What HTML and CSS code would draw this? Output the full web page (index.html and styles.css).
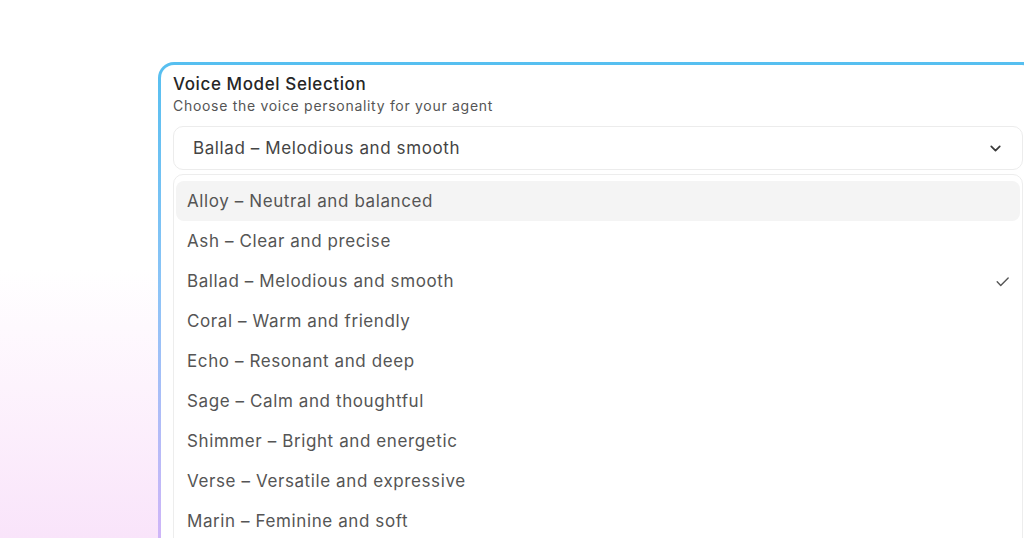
FILE: index.html
```html
<!DOCTYPE html>
<html>
  <head>
    <meta name="viewport" content="width=device-width, initial-scale=1.0" />
    <link rel="stylesheet" href="styles.css">
  </head>
  <body>
    <div class="page">
      <div class="card">
        <div class="card-title">Voice Model Selection</div>
        <div class="card-subtitle">Choose the voice personality for your agent</div>

        <div class="select">
          <span class="select-value">Ballad – Melodious and smooth</span>
          <svg class="select-chevron" viewBox="0 0 24 24" fill="none" stroke="currentColor">
            <path stroke-linecap="round" stroke-linejoin="round" stroke-width="2.4" d="M6 9l6 6 6-6" />
          </svg>
        </div>

        <div class="options">
          <div class="option hover">Alloy – Neutral and balanced</div>
          <div class="option">Ash – Clear and precise</div>
          <div class="option selected">
            <span>Ballad – Melodious and smooth</span>
            <svg class="option-check" viewBox="0 0 24 24" fill="none" stroke="currentColor">
              <path stroke-linecap="round" stroke-linejoin="round" stroke-width="2" d="M4.5 12.5l5 5L20 7" />
            </svg>
          </div>
          <div class="option">Coral – Warm and friendly</div>
          <div class="option">Echo – Resonant and deep</div>
          <div class="option">Sage – Calm and thoughtful</div>
          <div class="option">Shimmer – Bright and energetic</div>
          <div class="option">Verse – Versatile and expressive</div>
          <div class="option">Marin – Feminine and soft</div>
        </div>
      </div>
    </div>
  </body>
</html>
```

FILE: styles.css
```css
* {
  margin: 0;
  padding: 0;
  box-sizing: border-box;
}

html,
body {
  height: 100%;
}

body {
  font-family: Inter, "Liberation Sans", Arial, sans-serif;
  background: linear-gradient(
    180deg,
    #ffffff 0%,
    #ffffff 50%,
    #fdf3fd 72%,
    #f9e4fa 100%
  );
  overflow: hidden;
}

.page {
  padding: 62px 0 0 158px;
}

.card {
  width: 880px;
  padding: 8px 12px 12px;
  border: 3px solid transparent;
  border-radius: 16px;
  background: linear-gradient(#ffffff, #ffffff) padding-box,
    linear-gradient(180deg, #56bff0 0%, #8cc4f7 45%, #d6b4f8 100%) border-box;
}

.card-title {
  font-size: 17px;
  line-height: 22px;
  font-weight: 500;
  letter-spacing: 0.6px;
  color: #262626;
}

.card-subtitle {
  margin-top: 2px;
  font-size: 14px;
  line-height: 18px;
  letter-spacing: 0.7px;
  color: #555;
}

.select {
  margin-top: 11px;
  height: 44px;
  display: flex;
  align-items: center;
  justify-content: space-between;
  padding: 0 18px 0 19px;
  border: 1px solid #ececec;
  border-radius: 10px;
  font-size: 17px;
  letter-spacing: 0.6px;
  color: #444;
}

.select-chevron {
  width: 17px;
  height: 17px;
  color: #3a3a3a;
}

.options {
  margin-top: 4px;
  padding: 6px 2px;
  border: 1px solid #ededed;
  border-radius: 10px;
}

.option {
  height: 40px;
  display: flex;
  align-items: center;
  justify-content: space-between;
  padding: 0 9px 0 11px;
  border-radius: 8px;
  font-size: 17px;
  letter-spacing: 0.6px;
  color: #555;
}

.option.hover {
  background: #f4f4f4;
}

.option-check {
  width: 17px;
  height: 17px;
  color: #555;
}
```
